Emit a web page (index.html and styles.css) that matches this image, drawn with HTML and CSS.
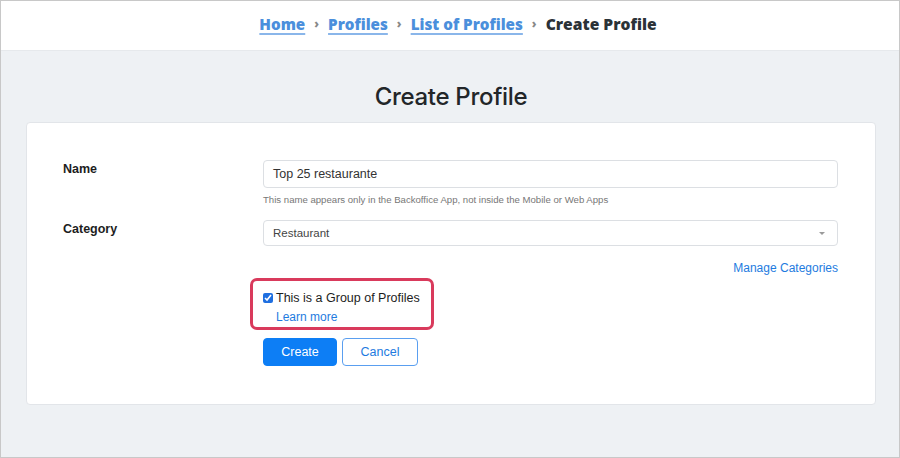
FILE: index.html
```html
<!DOCTYPE html>
<html>
<head>
<meta charset="utf-8">
<link rel="stylesheet" href="styles.css">
</head>
<body>
<div class="frame">
  <header class="topbar">
    <nav class="crumbs">
      <a class="crumb" href="#">Home</a><span class="sep">›</span>
      <a class="crumb" href="#">Profiles</a><span class="sep">›</span>
      <a class="crumb" href="#">List of Profiles</a><span class="sep">›</span>
      <span class="current">Create Profile</span>
    </nav>
  </header>
  <main class="main">
    <h1 class="title">Create Profile</h1>
    <section class="card">
      <div class="row">
        <div class="label">Name</div>
        <div class="field">
          <div class="input">Top 25 restaurante</div>
          <div class="help">This name appears only in the Backoffice App, not inside the Mobile or Web Apps</div>
        </div>
      </div>
      <div class="row row-cat">
        <div class="label">Category</div>
        <div class="field">
          <div class="select"><span>Restaurant</span><span class="caret"></span></div>
          <div class="manage"><a href="#">Manage Categories</a></div>
        </div>
      </div>
      <div class="row">
        <div class="label"></div>
        <div class="field">
          <div class="highlight">
            <label class="check"><input type="checkbox" checked><span>This is a Group of Profiles</span></label>
            <a class="learn" href="#">Learn more</a>
          </div>
          <div class="buttons">
            <button class="btn btn-primary">Create</button>
            <button class="btn btn-outline">Cancel</button>
          </div>
        </div>
      </div>
    </section>
  </main>
</div>
</body>
</html>
```
FILE: styles.css
```css
* { box-sizing: border-box; }
html, body { margin: 0; padding: 0; }
body {
  font-family: "Liberation Sans", Arial, sans-serif;
  color: #222;
}
.frame {
  width: 900px;
  height: 458px;
  border: 1px solid #c8c8c8;
  background: #eef1f4;
  display: flex;
  flex-direction: column;
  overflow: hidden;
}
.topbar {
  height: 50px;
  background: #fff;
  border-bottom: 1px solid #e6e9ec;
  display: flex;
  justify-content: center;
  align-items: center;
  padding-bottom: 4px;
}
.crumbs {
  font-family: "Open Sans", sans-serif;
  font-weight: 800;
  font-size: 15.2px;
  display: flex;
  align-items: center;
  margin-left: 16px;
}
.crumb {
  color: #4b8fdc;
  text-decoration: underline;
  text-decoration-thickness: 2px;
  text-underline-offset: 3px;
  text-decoration-color: #8ab6ea;
}
.sep {
  color: #888;
  font-size: 12px;
  margin: 0 9px;
}
.current { color: #2b3237; font-size: 15.6px; }
.main {
  flex: 1;
  padding: 0 23px 0 25px;
}
.title {
  margin: 32px 0 0;
  text-align: center;
  font-size: 24px;
  font-weight: 500;
  font-family: "Inter", "Liberation Sans", sans-serif;
  letter-spacing: -0.3px;
  color: #222629;
  line-height: 28px;
}
.card {
  margin-top: 11px;
  background: #fff;
  border: 1px solid #e2e5e9;
  border-radius: 4px;
  padding: 37px 37px 38px 36px;
}
.row {
  display: grid;
  grid-template-columns: 200px 1fr;
}
.row-cat { margin-top: 15px; }
.label {
  font-weight: 700;
  font-size: 12.5px;
  padding-top: 2px;
  color: #1d1d1d;
}
.input, .select {
  height: 28px;
  border: 1px solid #dcdfe3;
  border-radius: 4px;
  font-size: 12.5px;
  padding: 0 9px;
  display: flex;
  align-items: center;
  color: #333;
}
.select {
  height: 26px;
  justify-content: space-between;
  font-size: 11.5px;
  color: #444;
}
.caret {
  width: 0;
  height: 0;
  border-left: 3px solid transparent;
  border-right: 3px solid transparent;
  border-top: 3px solid #9a9a9a;
  margin-right: 3px;
}
.help {
  font-size: 9.6px;
  color: #777;
  margin-top: 6px;
}
.manage {
  text-align: right;
  margin-top: 15px;
  font-size: 12px;
}
.manage a, .learn { color: #1e7be0; text-decoration: none; }
.highlight {
  margin: 3px 0 0 -13px;
  width: 184px;
  height: 52px;
  border: 3px solid #d93a5c;
  border-radius: 7px;
  padding: 10px 0 0 10px;
}
.check {
  display: flex;
  align-items: center;
  font-size: 12.5px;
  color: #1d1d1d;
}
.check input {
  margin: 0 3px 0 0;
  width: 10px;
  height: 10px;
  accent-color: #1f6fe0;
}
.learn {
  display: block;
  font-size: 12px;
  margin: 5px 0 0 13px;
}
.buttons {
  display: flex;
  gap: 5px;
  margin-top: 8px;
}
.btn {
  height: 28px;
  border-radius: 4px;
  font-family: "Liberation Sans", Arial, sans-serif;
  font-size: 12.5px;
  padding: 0;
  cursor: pointer;
}
.btn-primary {
  width: 74px;
  background: #0d7ef5;
  border: 1px solid #0d7ef5;
  color: #fff;
}
.btn-outline {
  width: 76px;
  background: #fff;
  border: 1px solid #5a9ff0;
  color: #1e7be0;
}
```
